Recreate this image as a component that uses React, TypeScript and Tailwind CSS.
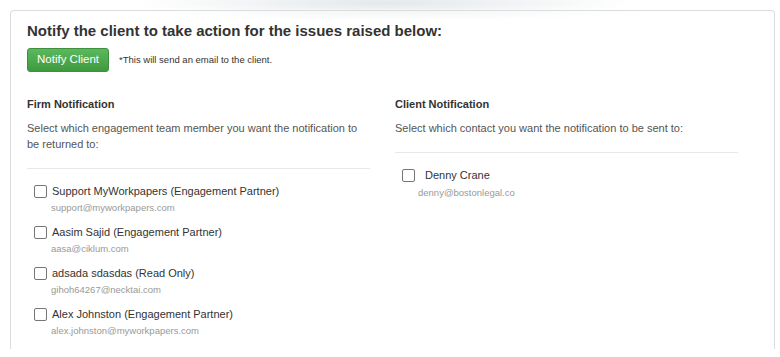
import React from 'react';

const firmMembers = [
  { name: 'Support MyWorkpapers (Engagement Partner)', email: 'support@myworkpapers.com' },
  { name: 'Aasim Sajid (Engagement Partner)', email: 'aasa@ciklum.com' },
  { name: 'adsada sdasdas (Read Only)', email: 'gihoh64267@necktai.com' },
  { name: 'Alex Johnston (Engagement Partner)', email: 'alex.johnston@myworkpapers.com' },
];

const Checkbox = () => (
  <span className="inline-block w-[13px] h-[13px] shrink-0 rounded-[2px] border border-[#767676] bg-white" />
);

export default function App() {
  return (
    <div className="w-[780px] h-[357px] bg-white overflow-hidden font-['Liberation_Sans',Arial,sans-serif] text-[#333]">
      {/* top shadow from the header above */}
      <div className="h-[10px] bg-[radial-gradient(ellipse_250px_14px_at_385px_3px,#e3e8ea,transparent)]" />

      <div className="mx-[10px] w-[765px] h-[339px] border-t border-x border-[#dcdcdc] rounded-t-[4px] bg-[radial-gradient(ellipse_250px_10px_at_385px_0px,#f3f6f5,#fff)] pl-[16px] pt-[9px]">
        <h3 className="text-[15px] leading-[22px] font-bold text-[#333]">
          Notify the client to take action for the issues raised below:
        </h3>

        <div className="flex items-center mt-[6px]">
          <button className="h-[24px] px-[9px] rounded-[3px] text-[11.5px] text-white bg-[linear-gradient(180deg,#5cb85c,#3f9a3f)] border border-[#3e8f3e]">
            Notify Client
          </button>
          <span className="ml-[10px] text-[9.5px] text-[#333]">*This will send an email to the client.</span>
        </div>

        <div className="grid grid-cols-[343px_343px] gap-x-[25px] mt-[24px]">
          {/* Firm column */}
          <div>
            <h4 className="text-[11px] leading-[16px] font-bold">Firm Notification</h4>
            <p className="mt-[8px] text-[11px] leading-[16px] text-[#555]">
              Select which engagement team member you want the notification to be returned to:
            </p>
            <div className="mt-[16px] border-t border-[#e8e8e8]" />
            <div className="pl-[7px] pt-[14px]">
              {firmMembers.map((m) => (
                <div key={m.email} className="h-[41px]">
                  <label className="flex items-center gap-[5px] text-[11px] leading-[16px] text-[#333]">
                    <Checkbox />
                    <span>{m.name}</span>
                  </label>
                  <div className="pl-[17px] mt-[3px] text-[9.5px] leading-[12px] text-[#999]">{m.email}</div>
                </div>
              ))}
            </div>
          </div>

          {/* Client column */}
          <div>
            <h4 className="text-[11px] leading-[16px] font-bold">Client Notification</h4>
            <p className="mt-[8px] text-[11px] leading-[16px] text-[#555]">
              Select which contact you want the notification to be sent to:
            </p>
            <div className="mt-[16px] border-t border-[#e8e8e8]" />
            <div className="pl-[7px] pt-[14px]">
              <label className="flex items-center gap-[10px] text-[11px] leading-[16px] text-[#333]">
                <Checkbox />
                <span>Denny Crane</span>
              </label>
              <div className="pl-[16px] mt-[4px] text-[9.5px] leading-[12px] text-[#999]">denny@bostonlegal.co</div>
            </div>
          </div>
        </div>
      </div>
    </div>
  );
}
